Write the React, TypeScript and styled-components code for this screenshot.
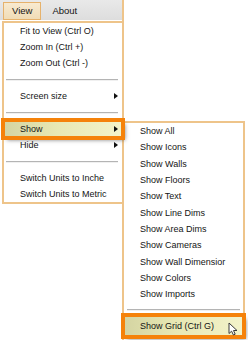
import styled, { createGlobalStyle, css } from "styled-components";

const GlobalStyle = createGlobalStyle`
  html, body {
    margin: 0;
    padding: 0;
    background: #ffffff;
  }
  body {
    font-family: "Liberation Sans", Arial, sans-serif;
  }
`;

const Screen = styled.div`
  display: flex;
  width: 248px;
  height: 340px;
  overflow: hidden;
  background: #ffffff;
  color: #141414;
  font-size: 9px;
`;

const LeftColumn = styled.div`
  box-sizing: border-box;
  width: 124px;
  flex-shrink: 0;
  border-right: 2px solid #eec48a;
  display: flex;
  flex-direction: column;
`;

const MenuBar = styled.div`
  box-sizing: border-box;
  height: 20px;
  display: flex;
  gap: 2px;
  padding: 2px 0 0 3px;
  background: linear-gradient(#e9e9e9, #dddddd);
`;

const BarItem = styled.div<{ $active?: boolean }>`
  box-sizing: border-box;
  height: 18px;
  padding: 0 8px;
  line-height: 16px;
  font-size: 9.5px;
  border: 1px solid transparent;
  ${(p) =>
    p.$active &&
    css`
      background: linear-gradient(#f8ead0, #f0dcb6);
      border-color: #e6b26c;
    `}
`;

const Dropdown = styled.div`
  margin: 1px 0 0 2px;
  border: 2px solid #eec48a;
  border-right: none;
  background: #ffffff;
`;

const MenuItem = styled.div<{ $selected?: boolean }>`
  position: relative;
  display: flex;
  align-items: center;
  justify-content: space-between;
  height: 16px;
  padding: 0 4px 0 16px;
  white-space: nowrap;
  ${(p) =>
    p.$selected &&
    css`
      z-index: 1;
      background: linear-gradient(90deg, #d4d4a2, #e8e8b4 45%, #f3f3ca);
      outline: 4px solid #f5820a;
      outline-offset: -1px;
      box-shadow: 3px 3px 4px rgba(0, 0, 0, 0.5);
    `}
`;

const SubItem = styled(MenuItem)`
  height: 16.3px;
  ${(p) =>
    p.$selected &&
    css`
      height: 20px;
    `}
`;

const Arrow = styled.span`
  width: 0;
  height: 0;
  border-top: 3.5px solid transparent;
  border-bottom: 3.5px solid transparent;
  border-left: 4px solid #111111;
`;

const Separator = styled.div`
  height: 0;
  margin: 8px 4px 7px 2px;
  border-top: 1px solid #b4b4b4;
  border-bottom: 1px solid #f0f0f0;
`;

const SubSeparator = styled(Separator)`
  margin: 6.7px 3px 5px 3px;
`;

const RightColumn = styled.div`
  display: flex;
  flex-direction: column;
  padding-top: 121px;
`;

const SubMenu = styled.div`
  box-sizing: border-box;
  width: 121px;
  border-top: 2px solid #eec48a;
  border-right: 2px solid #eec48a;
  background: #ffffff;
`;

const Pointer = styled.svg`
  position: absolute;
  left: 104px;
  top: 6px;
`;

const showItems = [
  "Show All",
  "Show Icons",
  "Show Walls",
  "Show Floors",
  "Show Text",
  "Show Line Dims",
  "Show Area Dims",
  "Show Cameras",
  "Show Wall Dimensior",
  "Show Colors",
  "Show Imports",
];

function App() {
  return (
    <>
      <GlobalStyle />
      <Screen>
        <LeftColumn>
          <MenuBar>
            <BarItem $active>View</BarItem>
            <BarItem>About</BarItem>
          </MenuBar>
          <Dropdown>
            <MenuItem>Fit to View (Ctrl O)</MenuItem>
            <MenuItem>Zoom In (Ctrl +)</MenuItem>
            <MenuItem>Zoom Out (Ctrl -)</MenuItem>
            <Separator />
            <MenuItem>
              Screen size
              <Arrow />
            </MenuItem>
            <Separator />
            <MenuItem $selected>
              Show
              <Arrow />
            </MenuItem>
            <MenuItem>
              Hide
              <Arrow />
            </MenuItem>
            <Separator />
            <MenuItem>Switch Units to Inche</MenuItem>
            <MenuItem>Switch Units to Metric</MenuItem>
          </Dropdown>
        </LeftColumn>
        <RightColumn>
          <SubMenu>
            {showItems.map((label) => (
              <SubItem key={label}>{label}</SubItem>
            ))}
            <SubSeparator />
            <SubItem $selected>
              Show Grid (Ctrl G)
              <Pointer width="11" height="14" viewBox="0 0 11 14">
                <path
                  d="M1 1 L1 11.5 L3.6 9.2 L5.4 13 L7.2 12.2 L5.5 8.5 L9 8.5 Z"
                  fill="#ffffff"
                  stroke="#3a3a3a"
                  strokeWidth="1"
                  strokeLinejoin="round"
                />
              </Pointer>
            </SubItem>
          </SubMenu>
        </RightColumn>
      </Screen>
    </>
  );
}

export default App;
